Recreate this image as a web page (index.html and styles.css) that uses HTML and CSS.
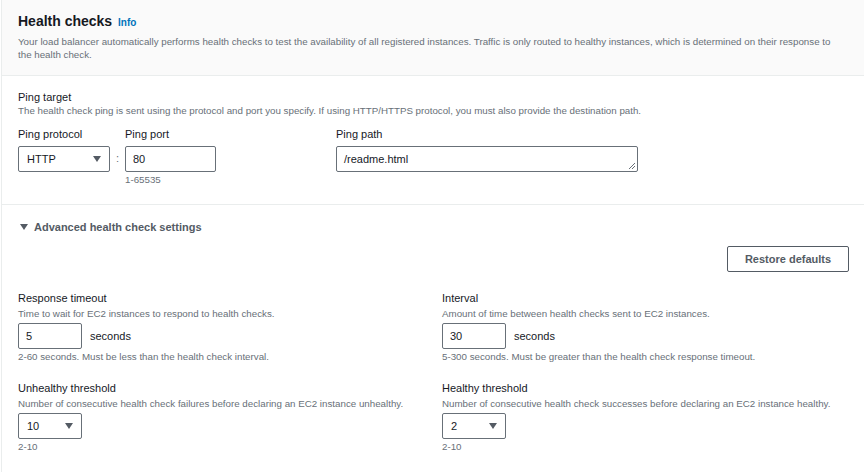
FILE: index.html
```html
<!DOCTYPE html>
<html>
<head>
<meta charset="utf-8">
<link rel="stylesheet" href="styles.css">
</head>
<body>
<div class="panel">
  <div class="header">
    <h2 class="title">Health checks <a class="info">Info</a></h2>
    <p class="desc">Your load balancer automatically performs health checks to test the availability of all registered instances. Traffic is only routed to healthy instances, which is determined on their response to the health check.</p>
  </div>

  <div class="section ping">
    <div class="label">Ping target</div>
    <div class="desc">The health check ping is sent using the protocol and port you specify. If using HTTP/HTTPS protocol, you must also provide the destination path.</div>
    <div class="ping-row">
      <div class="field proto">
        <div class="label">Ping protocol</div>
        <div class="select wide"><span>HTTP</span><span class="caret"></span></div>
      </div>
      <div class="colon">:</div>
      <div class="field port">
        <div class="label">Ping port</div>
        <div class="input port-input">80</div>
        <div class="hint">1-65535</div>
      </div>
      <div class="field path">
        <div class="label">Ping path</div>
        <div class="input textarea">/readme.html
          <svg class="grip" width="8" height="8" viewBox="0 0 8 8"><path d="M7 1L1 7M7 4L4 7" stroke="#687078" stroke-width="1" fill="none"/></svg>
        </div>
      </div>
    </div>
  </div>

  <div class="section adv">
    <div class="expander"><span class="tri"></span>Advanced health check settings</div>
    <div class="btn-row"><button class="btn">Restore defaults</button></div>
    <div class="grid">
      <div class="field">
        <div class="label">Response timeout</div>
        <div class="desc">Time to wait for EC2 instances to respond to health checks.</div>
        <div class="inline"><div class="input small">5</div><span class="unit">seconds</span></div>
        <div class="hint">2-60 seconds. Must be less than the health check interval.</div>
      </div>
      <div class="field">
        <div class="label">Interval</div>
        <div class="desc">Amount of time between health checks sent to EC2 instances.</div>
        <div class="inline"><div class="input small">30</div><span class="unit">seconds</span></div>
        <div class="hint">5-300 seconds. Must be greater than the health check response timeout.</div>
      </div>
      <div class="field">
        <div class="label">Unhealthy threshold</div>
        <div class="desc">Number of consecutive health check failures before declaring an EC2 instance unhealthy.</div>
        <div class="select small"><span>10</span><span class="caret"></span></div>
        <div class="hint">2-10</div>
      </div>
      <div class="field">
        <div class="label">Healthy threshold</div>
        <div class="desc">Number of consecutive health check successes before declaring an EC2 instance healthy.</div>
        <div class="select small"><span>2</span><span class="caret"></span></div>
        <div class="hint">2-10</div>
      </div>
    </div>
  </div>
</div>
</body>
</html>
```

FILE: styles.css
```css
* { box-sizing: border-box; }
html, body { margin: 0; padding: 0; background: #fff; }
body {
  font-family: "Liberation Sans", Arial, sans-serif;
  color: #16191f;
  width: 864px;
  height: 472px;
  overflow: hidden;
}
.panel {
  margin-left: 1px;
  border-left: 1px solid #eaeded;
  min-height: 472px;
}
.header {
  background: #fafafa;
  border-bottom: 1px solid #eaeded;
  padding: 11px 20px 14px 16px;
}
.title {
  margin: 0;
  font-size: 14px;
  line-height: 20px;
  font-weight: bold;
}
.info {
  font-size: 10px;
  color: #0073bb;
  font-weight: bold;
  margin-left: 2px;
}
.desc {
  margin: 2px 0 0;
  font-size: 9.75px;
  line-height: 13px;
  color: #687078;
}
.section { padding: 14px 15px 18px 16px; }
.ping { border-bottom: 1px solid #eaeded; }
.label {
  font-size: 11px;
  line-height: 14px;
  color: #16191f;
}
.ping > .desc { margin-top: 0; }
.ping-row {
  display: flex;
  margin-top: 10px;
}
.field .label { margin-bottom: 5px; }
.proto { width: 92px; }
.colon {
  width: 15px;
  text-align: center;
  font-size: 11px;
  color: #687078;
  padding-top: 25px;
}
.port { width: 211px; }
.path { width: 302px; }
.input, .select {
  height: 26px;
  border: 1px solid #687078;
  border-radius: 2px;
  font-size: 11px;
  line-height: 24px;
  padding: 0 7px;
  color: #16191f;
  background: #fff;
}
.port-input { width: 91px; }
.textarea { width: 302px; position: relative; }
.grip { position: absolute; right: 1px; bottom: 1px; }
.select {
  display: flex;
  justify-content: space-between;
  align-items: center;
  padding: 0 8px;
}
.select.wide { width: 92px; }
.caret {
  width: 0; height: 0;
  border-left: 4px solid transparent;
  border-right: 4px solid transparent;
  border-top: 6px solid #545b64;
}
.hint {
  font-size: 9.75px;
  line-height: 13px;
  color: #687078;
  margin-top: 1px;
}
.adv { padding: 15px 15px 0 16px; }
.expander {
  font-size: 11px;
  line-height: 14px;
  font-weight: bold;
  color: #545b64;
  display: flex;
  align-items: center;
  margin-left: 2px;
}
.tri {
  width: 0; height: 0;
  border-left: 4px solid transparent;
  border-right: 4px solid transparent;
  border-top: 6px solid #545b64;
  margin-right: 6px;
}
.btn-row {
  display: flex;
  justify-content: flex-end;
  margin-top: 12px;
}
.btn {
  width: 122px;
  height: 26px;
  border: 1px solid #545b64;
  border-radius: 2px;
  background: #fff;
  font-family: inherit;
  font-size: 11px;
  font-weight: bold;
  color: #545b64;
  padding: 0;
}
.grid {
  display: grid;
  grid-template-columns: 404px 404px;
  column-gap: 20px;
  row-gap: 18px;
  margin-top: 19px;
}
.grid .field .label { margin-bottom: 0; }
.grid .desc { margin-top: 2px; margin-bottom: 3px; }
.inline { display: flex; align-items: center; }
.small { width: 64px; }
.unit { font-size: 11px; margin-left: 8px; color: #16191f; }
.grid .hint { margin-top: 1px; }
```
